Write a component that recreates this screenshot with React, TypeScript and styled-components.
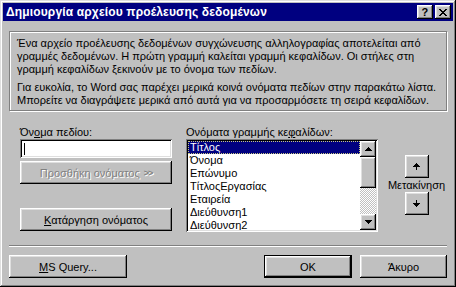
import styled, { createGlobalStyle } from 'styled-components';

const face = '#c0c0c0';
const shadow = '#808080';
const light = '#dfdfdf';
const navy = '#000080';

const raised = `
  box-shadow: inset -1px -1px #000, inset 1px 1px #fff,
    inset -2px -2px ${shadow}, inset 2px 2px ${light};
`;

const sunken = `
  box-shadow: inset 1px 1px ${shadow}, inset -1px -1px #fff,
    inset 2px 2px #000, inset -2px -2px ${light};
`;

const GlobalStyle = createGlobalStyle`
  body {
    margin: 0;
    background: ${face};
    font-family: "Liberation Sans", Arial, sans-serif;
    font-size: 11px;
    color: #000;
  }
`;

const Window = styled.div`
  box-sizing: border-box;
  width: 456px;
  height: 287px;
  padding: 3px;
  display: flex;
  flex-direction: column;
  background: ${face};
  box-shadow: inset -1px -1px #000, inset 1px 1px ${light},
    inset -2px -2px ${shadow}, inset 2px 2px #fff;
`;

const TitleBar = styled.div`
  height: 18px;
  display: flex;
  align-items: center;
  padding: 0 2px 0 3px;
  background: ${navy};
  color: #fff;
  font-weight: bold;
  font-size: 12px;
  letter-spacing: 0.15px;
  white-space: nowrap;
`;

const TitleText = styled.span`
  flex: 1;
`;

const TitleButtons = styled.div`
  display: flex;
  gap: 2px;
`;

const TitleButton = styled.div`
  width: 16px;
  height: 14px;
  display: flex;
  align-items: center;
  justify-content: center;
  background: ${face};
  color: #000;
  font-size: 11px;
  font-weight: bold;
  ${raised}
`;

const Body = styled.div`
  flex: 1;
  display: flex;
  flex-direction: column;
  padding: 10px 6px 6px;
`;

const InfoBox = styled.div`
  box-sizing: border-box;
  height: 80px;
  padding: 5px 7px;
  border: 1px solid ${shadow};
  box-shadow: 1px 1px 0 #fff, inset 1px 1px 0 #fff;
  line-height: 13px;
`;

const Para = styled.p<{ $gap?: number }>`
  margin: ${(p) => p.$gap ?? 0}px 0 0;
  span {
    display: block;
    white-space: nowrap;
  }
`;

const Fields = styled.div`
  display: flex;
  height: 106px;
  margin-top: 15px;
  padding-left: 11px;
`;

const Column = styled.div<{ $width?: number }>`
  display: flex;
  flex-direction: column;
  width: ${(p) => (p.$width ? `${p.$width}px` : 'auto')};
`;

const Label = styled.div`
  height: 13px;
  line-height: 13px;
  white-space: nowrap;
`;

const TextInput = styled.div`
  position: relative;
  height: 19px;
  background: #fff;
  ${sunken}
`;

const Caret = styled.span`
  position: absolute;
  left: 4px;
  top: 4px;
  width: 1px;
  height: 12px;
  background: #000;
`;

const Button = styled.div<{ $width?: number; $disabled?: boolean; $default?: boolean }>`
  box-sizing: border-box;
  height: 23px;
  width: ${(p) => (p.$width ? `${p.$width}px` : 'auto')};
  display: flex;
  align-items: center;
  justify-content: center;
  background: ${face};
  white-space: nowrap;
  color: ${(p) => (p.$disabled ? shadow : '#000')};
  text-shadow: ${(p) => (p.$disabled ? '1px 1px 0 #fff' : 'none')};
  ${(p) =>
    p.$default
      ? `box-shadow: inset 0 0 0 1px #000, inset -2px -2px #000, inset 2px 2px #fff,
    inset -3px -3px ${shadow}, inset 3px 3px ${light};`
      : raised}
`;

const Chevrons = styled.span`
  margin-left: 4px;
  font-size: 9px;
  font-weight: bold;
  letter-spacing: -1px;
`;

const ListBox = styled.div`
  box-sizing: border-box;
  height: 93px;
  padding: 2px;
  display: flex;
  background: #fff;
  ${sunken}
`;

const Items = styled.div`
  flex: 1;
  overflow: hidden;
`;

const Item = styled.div<{ $selected?: boolean }>`
  height: 13px;
  line-height: 13px;
  padding-left: 2px;
  white-space: nowrap;
  background: ${(p) => (p.$selected ? navy : 'transparent')};
  color: ${(p) => (p.$selected ? '#fff' : '#000')};
  outline: ${(p) => (p.$selected ? '1px dotted #c8c880' : 'none')};
  outline-offset: -1px;
`;

const ScrollBar = styled.div`
  width: 16px;
  display: flex;
  flex-direction: column;
`;

const ScrollTrack = styled.div`
  flex: 1;
  background-image: repeating-conic-gradient(${face} 0 25%, #fff 0 50%);
  background-size: 2px 2px;
`;

const ScrollButton = styled.div<{ $height?: number }>`
  height: ${(p) => p.$height ?? 16}px;
  display: flex;
  align-items: center;
  justify-content: center;
  background: ${face};
  ${raised}
`;

const MoveColumn = styled.div`
  flex: 1;
  display: flex;
  flex-direction: column;
  align-items: center;
  padding-top: 29px;
  margin-left: 8px;
`;

const MoveButton = styled.div`
  width: 24px;
  height: 23px;
  display: flex;
  align-items: center;
  justify-content: center;
  background: ${face};
  ${raised}
`;

const MoveLabel = styled.div`
  height: 14px;
  line-height: 14px;
`;

const Separator = styled.div`
  height: 1px;
  margin-top: 13px;
  background: ${shadow};
  border-bottom: 1px solid #fff;
`;

const Footer = styled.div`
  display: flex;
  gap: 8px;
  margin-top: 8px;
`;

const Spacer = styled.div`
  flex: 1;
`;

const U = styled.u`
  text-underline-offset: 1px;
`;

const Arrow = ({ down }: { down?: boolean }) => (
  <svg width="7" height="7" viewBox="0 0 7 7" shapeRendering="crispEdges">
    <g transform={down ? 'rotate(180 3.5 3.5)' : undefined}>
      <path d="M3 0h1v1h1v1h1v1h1v1H4v3H3V4H0V3h1V2h1V1h1z" fill="#000" />
    </g>
  </svg>
);

const ScrollArrow = ({ down }: { down?: boolean }) => (
  <svg width="7" height="4" viewBox="0 0 7 4" shapeRendering="crispEdges">
    <path
      d={down ? 'M0 0h7v1H6v1H5v1H4v1H3V3H2V2H1V1H0z' : 'M3 0h1v1h1v1h1v1h1v1H0V3h1V2h1V1h1z'}
      fill="#000"
    />
  </svg>
);

const CloseGlyph = () => (
  <svg width="8" height="7" viewBox="0 0 8 7" shapeRendering="crispEdges">
    <path
      d="M0 0h2v1h1v1h2V1h1V0h2v1H7v1H6v1H5v1h1v1h1v1h1v1H6V6H5V5H3v1H2v1H0V6h1V5h1V4h1V3H2V2H1V1H0z"
      fill="#000"
    />
  </svg>
);

const fields = [
  'Τίτλος',
  'Όνομα',
  'Επώνυμο',
  'ΤίτλοςΕργασίας',
  'Εταιρεία',
  'Διεύθυνση1',
  'Διεύθυνση2',
];

export default function App() {
  return (
    <>
      <GlobalStyle />
      <Window>
        <TitleBar>
          <TitleText>Δημιουργία αρχείου προέλευσης δεδομένων</TitleText>
          <TitleButtons>
            <TitleButton>?</TitleButton>
            <TitleButton>
              <CloseGlyph />
            </TitleButton>
          </TitleButtons>
        </TitleBar>
        <Body>
          <InfoBox>
            <Para>
              <span>Ένα αρχείο προέλευσης δεδομένων συγχώνευσης αλληλογραφίας αποτελείται από</span>
              <span>γραμμές δεδομένων. Η πρώτη γραμμή καλείται γραμμή κεφαλίδων. Οι στήλες στη</span>
              <span>γραμμή κεφαλίδων ξεκινούν με το όνομα των πεδίων.</span>
            </Para>
            <Para $gap={5}>
              <span>Για ευκολία, το Word σας παρέχει μερικά κοινά ονόματα πεδίων στην παρακάτω λίστα.</span>
              <span>Μπορείτε να διαγράψετε μερικά από αυτά για να προσαρμόσετε τη σειρά κεφαλίδων.</span>
            </Para>
          </InfoBox>

          <Fields>
            <Column $width={152}>
              <Label>
                Όν<U>ο</U>μα πεδίου:
              </Label>
              <TextInput>
                <Caret />
              </TextInput>
              <Button $disabled style={{ marginTop: 3 }}>
                Προσθήκη ονόματος<Chevrons>&gt;&gt;</Chevrons>
              </Button>
              <Spacer />
              <Button style={{ marginBottom: 1 }}>
                <span>
                  <U>Κ</U>ατάργηση ονόματος
                </span>
              </Button>
            </Column>

            <Column $width={192} style={{ marginLeft: 14 }}>
              <Label>
                Ονόματα γραμμής κε<U>φ</U>αλίδων:
              </Label>
              <ListBox>
                <Items>
                  {fields.map((f, i) => (
                    <Item key={f} $selected={i === 0}>
                      {f}
                    </Item>
                  ))}
                </Items>
                <ScrollBar>
                  <ScrollButton>
                    <ScrollArrow />
                  </ScrollButton>
                  <ScrollButton $height={31} />
                  <ScrollTrack />
                  <ScrollButton>
                    <ScrollArrow down />
                  </ScrollButton>
                </ScrollBar>
              </ListBox>
            </Column>

            <MoveColumn>
              <MoveButton>
                <Arrow />
              </MoveButton>
              <MoveLabel>Μετακίνηση</MoveLabel>
              <MoveButton>
                <Arrow down />
              </MoveButton>
            </MoveColumn>
          </Fields>

          <Separator />

          <Footer>
            <Button $width={118}>
              <span>
                <U>M</U>S Query...
              </span>
            </Button>
            <Spacer />
            <Button $width={88} $default>
              OK
            </Button>
            <Button $width={87}>Άκυρο</Button>
          </Footer>
        </Body>
      </Window>
    </>
  );
}
